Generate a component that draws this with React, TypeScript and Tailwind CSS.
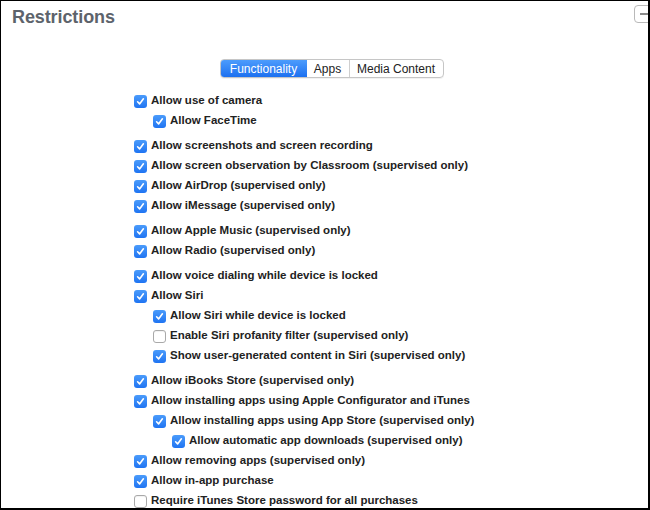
import React from "react";

type Item = { label: string; level: number; checked: boolean };

// groups separated by a small gap
const groups: Item[][] = [
  [
    { label: "Allow use of camera", level: 0, checked: true },
    { label: "Allow FaceTime", level: 1, checked: true },
  ],
  [
    { label: "Allow screenshots and screen recording", level: 0, checked: true },
    { label: "Allow screen observation by Classroom (supervised only)", level: 0, checked: true },
    { label: "Allow AirDrop (supervised only)", level: 0, checked: true },
    { label: "Allow iMessage (supervised only)", level: 0, checked: true },
  ],
  [
    { label: "Allow Apple Music (supervised only)", level: 0, checked: true },
    { label: "Allow Radio (supervised only)", level: 0, checked: true },
  ],
  [
    { label: "Allow voice dialing while device is locked", level: 0, checked: true },
    { label: "Allow Siri", level: 0, checked: true },
    { label: "Allow Siri while device is locked", level: 1, checked: true },
    { label: "Enable Siri profanity filter (supervised only)", level: 1, checked: false },
    { label: "Show user-generated content in Siri (supervised only)", level: 1, checked: true },
  ],
  [
    { label: "Allow iBooks Store (supervised only)", level: 0, checked: true },
    { label: "Allow installing apps using Apple Configurator and iTunes", level: 0, checked: true },
    { label: "Allow installing apps using App Store (supervised only)", level: 1, checked: true },
    { label: "Allow automatic app downloads (supervised only)", level: 2, checked: true },
    { label: "Allow removing apps (supervised only)", level: 0, checked: true },
    { label: "Allow in-app purchase", level: 0, checked: true },
    { label: "Require iTunes Store password for all purchases", level: 0, checked: false },
  ],
];

const indent = ["pl-0", "pl-[19px]", "pl-[38px]"];

function Checkbox({ checked }: { checked: boolean }) {
  if (!checked) {
    return <span className="block h-[13px] w-[13px] rounded-[3px] border border-[#a9a9a9] bg-white shadow-[inset_0_1px_1px_rgba(0,0,0,0.06)]" />;
  }
  return (
    <span className="flex h-[13px] w-[13px] items-center justify-center rounded-[3px] bg-gradient-to-b from-[#4a9bfb] to-[#1f74f2]">
      <svg width="9" height="9" viewBox="0 0 9 9">
        <path d="M1.6 4.8 L3.6 6.9 L7.4 1.8" fill="none" stroke="white" strokeWidth="1.6" strokeLinecap="round" strokeLinejoin="round" />
      </svg>
    </span>
  );
}

export default function App() {
  return (
    <div className="relative h-[510px] w-[650px] overflow-hidden border-l border-t border-b-2 border-r-2 border-black bg-white font-['Liberation_Sans',Arial,sans-serif]">
      {/* Header */}
      <div className="flex items-start justify-between">
        <h1 className="ml-[11px] mt-[3px] text-[18px] font-bold tracking-[-0.1px] text-[#5d636b]">Restrictions</h1>
        <div className="mr-[-6px] mt-[4px] flex h-[18px] w-[20px] items-center justify-center rounded-[4px] border border-[#b9b9b9] bg-white">
          <span className="block h-[2px] w-[8px] bg-[#8a8a8a]" />
        </div>
      </div>

      {/* Segmented control */}
      <div className="mt-[28px] flex justify-center pl-[14px]">
        <div className="flex h-[19px] overflow-hidden rounded-[4px] border border-[#c6c6c6] text-[12px] leading-none text-[#222] shadow-[0_1px_0_rgba(0,0,0,0.05)]">
          <div className="flex w-[86px] items-center justify-center bg-gradient-to-b from-[#4c9cfc] to-[#1c70f0] text-white">Functionality</div>
          <div className="flex w-[43px] items-center justify-center border-r border-[#cfcfcf]">Apps</div>
          <div className="flex w-[93px] items-center justify-center">Media Content</div>
        </div>
      </div>

      {/* Options */}
      <div className="ml-[133px] mt-[13px] flex flex-col gap-[5px]">
        {groups.map((g, gi) => (
          <div key={gi} className="flex flex-col">
            {g.map((it) => (
              <div key={it.label} className={`flex h-[20px] items-center gap-[4px] ${indent[it.level]}`}>
                <Checkbox checked={it.checked} />
                <span className="text-[11.5px] font-bold text-[#222]">{it.label}</span>
              </div>
            ))}
          </div>
        ))}
      </div>
    </div>
  );
}
